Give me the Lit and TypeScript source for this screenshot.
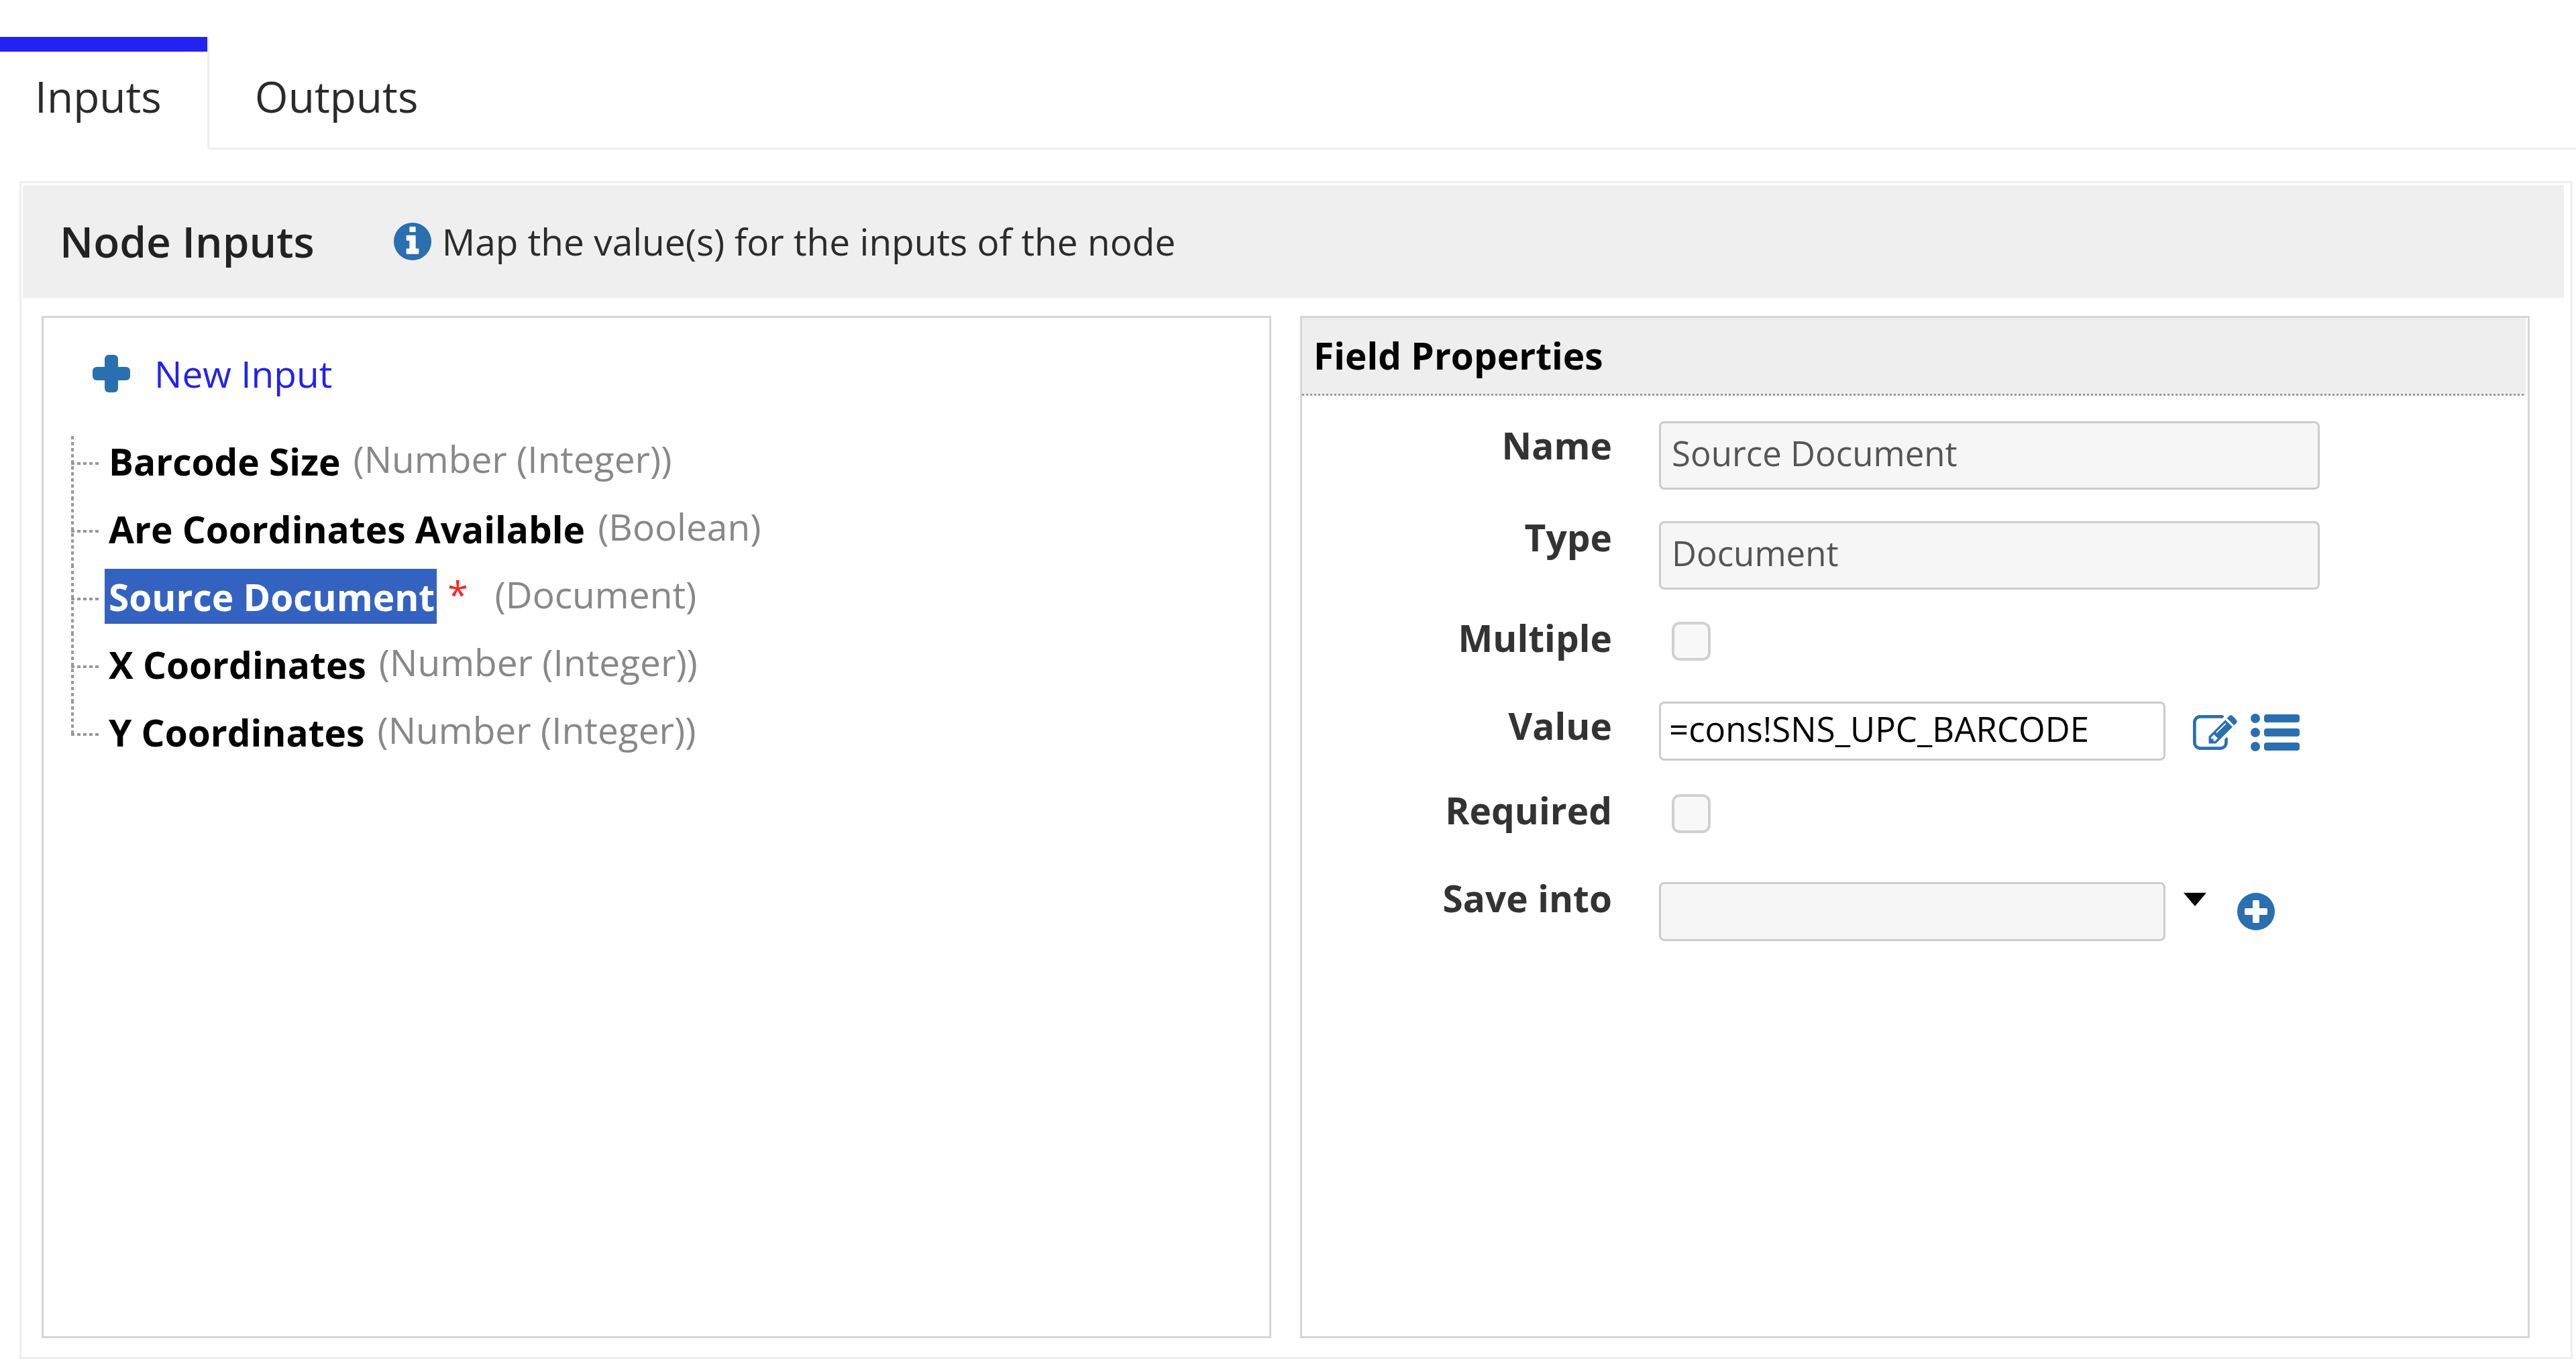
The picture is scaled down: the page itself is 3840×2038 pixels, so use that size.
import { LitElement, html, css, svg, nothing } from "lit";
import { customElement, state } from "lit/decorators.js";
import { classMap } from "lit/directives/class-map.js";

interface NodeInput {
  name: string;
  type: string;
  required?: boolean;
}

const INPUTS: NodeInput[] = [
  { name: "Barcode Size", type: "Number (Integer)" },
  { name: "Are Coordinates Available", type: "Boolean" },
  { name: "Source Document", type: "Document", required: true },
  { name: "X Coordinates", type: "Number (Integer)" },
  { name: "Y Coordinates", type: "Number (Integer)" },
];

const infoIcon = html`<svg class="icon round" viewBox="128 128 1536 1536" aria-hidden="true">
  ${svg`<circle cx="896" cy="896" r="700" fill="#fff"/><path d="M1152 1376v-160q0-14-9-23t-23-9h-96v-512q0-14-9-23t-23-9h-320q-14 0-23 9t-9 23v160q0 14 9 23t23 9h96v320h-96q-14 0-23 9t-9 23v160q0 14 9 23t23 9h448q14 0 23-9t9-23zm-128-896v-160q0-14-9-23t-23-9h-192q-14 0-23 9t-9 23v160q0 14 9 23t23 9h192q14 0 23-9t9-23zm640 416q0 209-103 385.5t-279.5 279.5-385.5 103-385.5-103-279.5-279.5-103-385.5 103-385.5 279.5-279.5 385.5-103 385.5 103 279.5 279.5 103 385.5z"/>`}
</svg>`;

const plusIcon = html`<svg class="icon round" viewBox="0 0 56 56" aria-hidden="true">
  ${svg`<rect x="18" y="0" width="20" height="56" rx="6"/><rect x="0" y="18" width="56" height="20" rx="6"/>`}
</svg>`;

const addIcon = html`<svg class="icon round" viewBox="0 0 56 56" aria-hidden="true">
  ${svg`<circle cx="28" cy="28" r="28"/><rect x="23" y="11" width="10" height="34" rx="2" fill="#fff"/><rect x="11" y="23" width="34" height="10" rx="2" fill="#fff"/>`}
</svg>`;

const editIcon = html`<svg class="icon edit" viewBox="0 128 1792 1408" aria-hidden="true">
  ${svg`<path d="M888 1184l116-116-152-152-116 116v56h96v96h56zm440-720q-16-16-33 1l-350 350q-17 17-1 33t33-1l350-350q17-17 1-33zm80 594v190q0 119-84.5 203.5t-203.5 84.5h-832q-119 0-203.5-84.5t-84.5-203.5v-832q0-119 84.5-203.5t203.5-84.5h832q63 0 117 25 15 7 18 23 3 17-9 29l-49 49q-14 14-32 8-23-6-45-6h-832q-66 0-113 47t-47 113v832q0 66 47 113t113 47h832q66 0 113-47t47-113v-126q0-13 9-22l64-64q15-15 35-7t20 29zm-96-738l288 288-672 672h-288v-288zm444 132l-92 92-288-288 92-92q28-28 68-28t68 28l152 152q28 28 28 68t-28 68z"/>`}
</svg>`;

const listIcon = html`<svg class="icon list" viewBox="0 0 74 56" aria-hidden="true">
  ${[7, 28, 49].map(
    (y) => svg`<circle cx="8" cy=${y} r="7"/><rect x="21" y=${y - 6} width="53" height="12" rx="4"/>`
  )}
</svg>`;

const caretIcon = html`<svg class="caret" viewBox="0 0 34 20" aria-hidden="true">
  ${svg`<path d="M0 0h34L17 20z"/>`}
</svg>`;

@customElement("app-root")
export class AppRoot extends LitElement {
  @state() private selected = "Source Document";

  static styles = css`
    :host {
      display: flex;
      flex-direction: column;
      box-sizing: border-box;
      min-height: 100vh;
      padding: 55px 0 12px;
      background: #fff;
      color: #2b2b2b;
      font-family: "Open Sans", "Noto Sans", sans-serif;
      font-size: 55px;
      line-height: 76px;
    }
    * {
      box-sizing: border-box;
    }
    button,
    input {
      margin: 0;
      padding: 0;
      border: 0;
      background: none;
      color: inherit;
      font: inherit;
    }
    .icon {
      display: block;
      flex: none;
      fill: #2a6fb0;
    }
    .round {
      width: 56px;
      height: 56px;
    }
    .edit {
      width: 66px;
      height: 52px;
    }
    .list {
      width: 74px;
      height: 56px;
    }
    .caret {
      display: block;
      width: 34px;
      height: 20px;
    }
    .tabs {
      display: flex;
    }
    .tab {
      height: 168px;
      padding: 22px 68px 10px;
      border-bottom: 3px solid #eee;
      font-size: 64px;
      line-height: 88px;
    }
    .tab.active {
      padding-left: 52px;
      border-right: 3px solid #eee;
      border-bottom-color: transparent;
      background: linear-gradient(#2322f0, #2322f0) border-box 0 0 / 100% 22px no-repeat;
    }
    .tabs::after {
      content: "";
      flex: 1;
      border-bottom: 3px solid #eee;
    }
    .frame {
      display: flex;
      flex: 1;
      flex-direction: column;
      gap: 27px;
      margin: 47px 5px 0 29px;
      padding: 3px 0 28px;
      border: 3px solid #eee;
    }
    .banner {
      display: flex;
      align-items: center;
      gap: 118px;
      height: 168px;
      margin: 0 10px 0 2px;
      padding: 0 55px;
      background: #efefef;
    }
    h1,
    h2,
    p,
    ul {
      margin: 0;
      padding: 0;
    }
    h1 {
      color: #222;
      font-size: 64px;
      font-weight: 600;
      line-height: 88px;
    }
    .hint {
      display: flex;
      align-items: center;
      gap: 16px;
    }
    .panels {
      display: grid;
      flex: 1;
      grid-template-columns: 1fr 1fr;
      gap: 43px;
      padding: 0 61px 0 30px;
    }
    .panel {
      border: 3px solid #d6d6d6;
    }
    .tree {
      padding: 45px 41px;
    }
    .new {
      display: flex;
      align-items: center;
      gap: 36px;
      margin-left: 32px;
      color: #2322f0;
      cursor: pointer;
    }
    ul {
      margin-top: 45px;
      list-style: none;
    }
    li {
      display: flex;
      height: 101px;
    }
    .branch {
      width: 41px;
      margin-right: 9px;
      background:
        repeating-linear-gradient(90deg, #999 0 5px, transparent 5px 9px) 0 49px / 41px 4px no-repeat,
        repeating-linear-gradient(#999 0 5px, transparent 5px 9px) 0 0 / 4px 101px no-repeat;
    }
    li:first-child .branch {
      background-position: 0 49px, 0 10px;
    }
    li:last-child .branch {
      background-size: 41px 4px, 4px 51px;
    }
    .name {
      height: 82px;
      margin-top: 6px;
      padding: 2px 3px 0 6px;
      color: #000;
      font-weight: 700;
      line-height: 80px;
      cursor: pointer;
    }
    .name.selected {
      background: #3462c1;
      color: #fff;
    }
    .star {
      margin: 6px 24px 0 16px;
      color: #f22;
    }
    .type {
      margin: 6px 0 0 16px;
      color: #888;
    }
    h2 {
      height: 116px;
      margin-right: 3px;
      padding: 18px 17px 0;
      background:
        repeating-linear-gradient(90deg, #999 0 3px, transparent 3px 6px) 0 100% / 100% 3px no-repeat,
        #eee;
      color: #000;
      font-size: 55px;
      font-weight: 700;
      line-height: 76px;
    }
    .fields {
      display: grid;
      grid-template-columns: 462fr 985fr;
      grid-template-rows: 137px 150px 131px 126px 131px 131px;
      column-gap: 70px;
      padding: 36px 310px 0 0;
    }
    .label {
      color: #333;
      font-weight: 700;
      text-align: right;
    }
    .control {
      display: flex;
      align-items: flex-start;
      padding-top: 2px;
    }
    .control.low {
      padding-top: 14px;
    }
    .text {
      flex: 1;
      min-width: 0;
      height: 88px;
      padding: 0 12px 8px;
      border: 3px solid #ccc;
      border-radius: 8px;
      background: #fff;
      color: #000;
      font-size: 51px;
      line-height: 72px;
    }
    .text:disabled {
      background: #f6f6f6;
      color: #555;
    }
    .text.tall {
      height: 102px;
      padding: 0 16px 8px;
    }
    .check {
      appearance: none;
      width: 58px;
      height: 58px;
      margin-left: 19px;
      border: 4px solid #d0d0d0;
      border-radius: 12px;
      background: #f8f8f8;
    }
    .actions {
      display: flex;
      align-items: center;
      width: 230px;
      gap: 19px;
      padding: 18px 0 0 41px;
    }
    .actions.save {
      align-items: flex-start;
      gap: 46px;
      padding: 16px 0 0 27px;
    }
    .actions button {
      cursor: pointer;
    }
  `;

  private renderItem(item: NodeInput) {
    const selected = item.name === this.selected;
    return html`<li>
      <span class="branch"></span>
      <button
        class=${classMap({ name: true, selected })}
        aria-pressed=${selected ? "true" : "false"}
        @click=${() => (this.selected = item.name)}
      >${item.name}</button>
      ${item.required ? html`<span class="star">*</span>` : nothing}
      <span class="type">(${item.type})</span>
    </li>`;
  }

  render() {
    const current = INPUTS.find((i) => i.name === this.selected)!;
    return html`
      <div class="tabs" role="tablist">
        <button class="tab active" role="tab" aria-selected="true">Inputs</button>
        <button class="tab" role="tab" aria-selected="false">Outputs</button>
      </div>
      <main class="frame">
        <header class="banner">
          <h1>Node Inputs</h1>
          <p class="hint">${infoIcon}<span>Map the value(s) for the inputs of the node</span></p>
        </header>
        <div class="panels">
          <section class="panel tree">
            <button class="new">${plusIcon}<span>New Input</span></button>
            <ul>${INPUTS.map((i) => this.renderItem(i))}</ul>
          </section>
          <section class="panel">
            <h2>Field Properties</h2>
            <div class="fields">
              <label class="label" for="name">Name</label>
              <div class="control"><input class="text tall" id="name" disabled .value=${current.name} /></div>
              <label class="label" for="type">Type</label>
              <div class="control low"><input class="text tall" id="type" disabled .value=${current.type} /></div>
              <label class="label" for="multiple">Multiple</label>
              <div class="control low"><input class="check" id="multiple" type="checkbox" disabled /></div>
              <label class="label" for="value">Value</label>
              <div class="control">
                <input class="text" id="value" .value=${"=cons!SNS_UPC_BARCODE"} />
                <div class="actions">
                  <button aria-label="Edit expression">${editIcon}</button>
                  <button aria-label="Choose value">${listIcon}</button>
                </div>
              </div>
              <label class="label" for="required">Required</label>
              <div class="control low"><input class="check" id="required" type="checkbox" disabled /></div>
              <label class="label" for="save">Save into</label>
              <div class="control low">
                <input class="text" id="save" disabled />
                <div class="actions save">
                  <button aria-label="Show variables">${caretIcon}</button>
                  <button aria-label="Add variable">${addIcon}</button>
                </div>
              </div>
            </div>
          </section>
        </div>
      </main>
    `;
  }
}
